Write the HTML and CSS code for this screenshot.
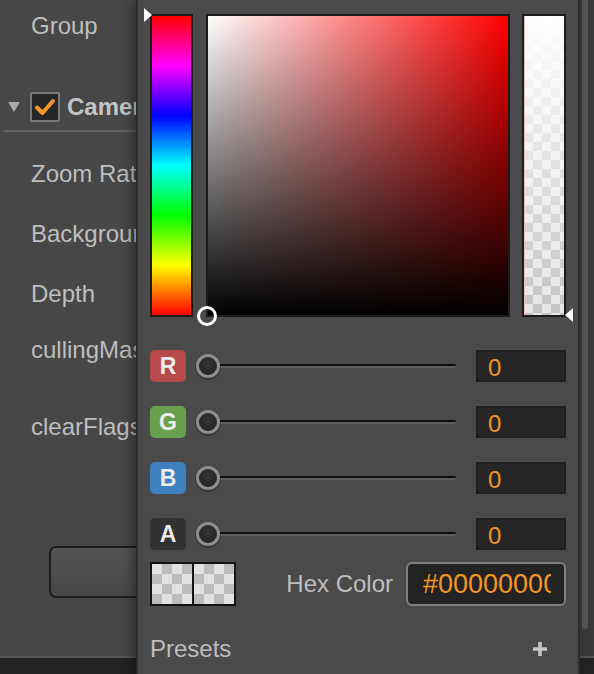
FILE: index.html
```html
<!DOCTYPE html>
<html>
<head>
<meta charset="utf-8">
<link rel="stylesheet" href="styles.css">
</head>
<body>
<div class="app">
  <div class="main">
    <div class="inspector">
      <div class="row-group">Group</div>
      <div class="section-head">
        <svg class="tri" width="12" height="12" viewBox="0 0 12 12"><path d="M0 1 H12 L6 11 Z" fill="#a9a9a9"/></svg>
        <span class="checkbox">
          <svg width="22" height="22" viewBox="0 0 22 22"><path d="M3 11.5 L8.5 17 L19 5" fill="none" stroke="#f4952a" stroke-width="4" stroke-linecap="round" stroke-linejoin="round"/></svg>
        </span>
        <span class="section-title">Camera</span>
      </div>
      <div class="sep"></div>
      <div class="prop first">Zoom Ratio</div>
      <div class="prop">Background</div>
      <div class="prop">Depth</div>
      <div class="prop tall">cullingMask</div>
      <div class="prop flags">clearFlags</div>
      <div class="btn-row"><div class="btn"></div></div>
    </div>
    <div class="scrollbar"><div class="thumb"></div></div>
  </div>
  <div class="bottom-bar"></div>

  <div class="picker">
    <div class="pickers">
      <div class="hue">
        <span class="hue-marker"></span>
      </div>
      <div class="sv">
        <div class="sv-black"></div>
        <span class="sv-marker"></span>
      </div>
      <div class="alpha">
        <div class="alpha-fill"></div>
        <span class="alpha-marker"></span>
      </div>
    </div>

    <div class="channels">
      <div class="channel">
        <span class="badge red">R</span>
        <div class="slider"><span class="knob"></span><div class="track"></div></div>
        <div class="num">0</div>
      </div>
      <div class="channel">
        <span class="badge green">G</span>
        <div class="slider"><span class="knob"></span><div class="track"></div></div>
        <div class="num">0</div>
      </div>
      <div class="channel">
        <span class="badge blue">B</span>
        <div class="slider"><span class="knob"></span><div class="track"></div></div>
        <div class="num">0</div>
      </div>
      <div class="channel">
        <span class="badge dark">A</span>
        <div class="slider"><span class="knob"></span><div class="track"></div></div>
        <div class="num">0</div>
      </div>
    </div>

    <div class="hex-row">
      <div class="swatch"><span class="sw-half"></span><span class="sw-half"></span></div>
      <span class="hex-label">Hex Color</span>
      <div class="hex-input"><span class="hex-text">#00000000</span></div>
    </div>

    <div class="presets">
      <span>Presets</span>
      <svg class="plus" width="16" height="16" viewBox="0 0 16 16"><path d="M8 1 V15 M1 8 H15" stroke="#c6c6c6" stroke-width="3.6"/></svg>
    </div>
  </div>
</div>
</body>
</html>
```

FILE: styles.css
```css
html, body {
  margin: 0;
  padding: 0;
}
body {
  width: 594px;
  height: 674px;
  overflow: hidden;
  background: #474747;
  font-family: "Liberation Sans", Arial, sans-serif;
  color: #bebebe;
}
.app {
  position: relative;
  width: 594px;
  height: 674px;
  display: flex;
  flex-direction: column;
}
.main {
  flex: 1;
  display: flex;
  min-height: 0;
}
.inspector {
  flex: 1;
  background: #474747;
  overflow: hidden;
}
.scrollbar {
  width: 14px;
  background: #393939;
  padding-left: 2px;
  box-sizing: border-box;
}
.thumb {
  width: 6px;
  height: 629px;
  background: #565656;
  border-radius: 0 0 3px 3px;
}
.bottom-bar {
  height: 16px;
  background: #222222;
  border-top: 2px solid #545454;
}
.row-group {
  height: 52px;
  line-height: 52px;
  padding-left: 31px;
  font-size: 24px;
}
.section-head {
  margin-top: 33px;
  height: 44px;
  display: flex;
  align-items: center;
  padding-left: 8px;
}
.tri {
  margin-right: 10px;
}
.checkbox {
  width: 26px;
  height: 26px;
  border: 2px solid #7b7b7b;
  background: #262626;
  border-radius: 2px;
  display: flex;
  align-items: center;
  justify-content: center;
  margin-right: 7px;
}
.section-title {
  font-weight: bold;
  font-size: 24px;
  color: #c4c4c4;
}
.sep {
  margin: 1px 0 0 4px;
  height: 2px;
  background: #616161;
}
.prop {
  height: 60px;
  line-height: 60px;
  padding-left: 31px;
  font-size: 24px;
  white-space: nowrap;
}
.prop.first {
  margin-top: 12px;
}
.prop.tall {
  height: 78px;
  line-height: 52px;
}
.prop.flags {
  height: 50px;
  line-height: 50px;
}
.btn-row {
  margin-top: 94px;
  padding-left: 49px;
}
.btn {
  height: 48px;
  width: 300px;
  border: 2px solid #1c1c1c;
  border-radius: 7px;
  background: linear-gradient(#545454, #464646);
}

/* Picker popup */
.picker {
  position: absolute;
  left: 136px;
  top: 0;
  width: 444px;
  height: 700px;
  box-sizing: border-box;
  background: #4a4a4a;
  border-left: 2px solid #2d2d2d;
  border-right: 2px solid #2d2d2d;
  box-shadow: -4px 0 10px rgba(0, 0, 0, 0.35);
  padding: 14px 12px 0 12px;
}
.pickers {
  display: flex;
  height: 303px;
}
.hue {
  position: relative;
  width: 43px;
  box-sizing: border-box;
  border: 2px solid #1c1c1c;
  background: linear-gradient(to bottom, #ff0000 0%, #ff00ff 16.67%, #0000ff 33.33%, #00ffff 50%, #00ff00 66.67%, #ffff00 83.33%, #ff0000 100%);
}
.hue-marker {
  position: absolute;
  left: -8px;
  top: -8px;
  width: 0;
  height: 0;
  border-top: 7px solid transparent;
  border-bottom: 7px solid transparent;
  border-left: 8px solid #ffffff;
}
.sv {
  position: relative;
  margin-left: 13px;
  width: 304px;
  box-sizing: border-box;
  border: 2px solid #1c1c1c;
  background: linear-gradient(to right, #ffffff, #ff0000);
}
.sv-black {
  width: 100%;
  height: 100%;
  background: linear-gradient(to bottom, rgba(0,0,0,0), #000000);
}
.sv-marker {
  position: absolute;
  left: -11px;
  bottom: -11px;
  width: 14px;
  height: 14px;
  border: 3px solid #ffffff;
  border-radius: 50%;
}
.alpha {
  position: relative;
  margin-left: 12px;
  width: 44px;
  box-sizing: border-box;
  border: 2px solid #1c1c1c;
  background-color: #e6e6e6;
  background-image:
    linear-gradient(45deg, #c4c4c4 25%, transparent 25%, transparent 75%, #c4c4c4 75%),
    linear-gradient(45deg, #c4c4c4 25%, transparent 25%, transparent 75%, #c4c4c4 75%);
  background-size: 18px 18px;
  background-position: 0 0, 9px 9px;
}
.alpha-fill {
  width: 100%;
  height: 100%;
  background: linear-gradient(to bottom, #ffffff, rgba(255,255,255,0));
  border-left: 1px solid #f0c0c0;
  box-sizing: border-box;
}
.alpha-marker {
  position: absolute;
  right: -9px;
  bottom: -7px;
  width: 0;
  height: 0;
  border-top: 7px solid transparent;
  border-bottom: 7px solid transparent;
  border-right: 8px solid #ffffff;
}

.channels {
  margin-top: 33px;
  display: flex;
  flex-direction: column;
  gap: 24px;
}
.channel {
  display: flex;
  align-items: center;
  height: 32px;
}
.badge {
  width: 36px;
  height: 32px;
  border-radius: 5px;
  display: flex;
  align-items: center;
  justify-content: center;
  font-weight: bold;
  font-size: 23px;
  color: #ececec;
}
.badge.red { background: #b94a4b; }
.badge.green { background: #69a04c; }
.badge.blue { background: #3e80be; }
.badge.dark { background: #313131; }
.slider {
  position: relative;
  margin-left: 10px;
  width: 260px;
  height: 32px;
  display: flex;
  align-items: center;
}
.track {
  margin-left: 12px;
  flex: 1;
  height: 4px;
  border-radius: 2px;
  background: linear-gradient(to bottom, #111111 50%, #5d5d5d 50%);
}
.knob {
  position: absolute;
  left: 0;
  top: 4px;
  width: 18px;
  height: 18px;
  border: 3px solid #8e8e8e;
  border-radius: 50%;
  background: radial-gradient(circle at 50% 40%, #353535, #1d1d1d);
  box-shadow: 0 1px 2px rgba(0,0,0,0.5);
  z-index: 1;
}
.num {
  margin-left: 20px;
  width: 90px;
  height: 32px;
  box-sizing: border-box;
  border: 2px solid #1f1f1f;
  background: #262626;
  color: #f39627;
  font-size: 24px;
  line-height: 31px;
  padding-left: 10px;
}

.hex-row {
  margin-top: 12px;
  display: flex;
  align-items: center;
  height: 44px;
}
.swatch {
  display: flex;
  width: 86px;
  height: 44px;
  box-sizing: border-box;
  border: 2px solid #151515;
  background: #151515;
  gap: 2px;
}
.sw-half {
  flex: 1;
  background-color: #e2e2e2;
  background-image:
    linear-gradient(45deg, #bcbcbc 25%, transparent 25%, transparent 75%, #bcbcbc 75%),
    linear-gradient(45deg, #bcbcbc 25%, transparent 25%, transparent 75%, #bcbcbc 75%);
  background-size: 20px 20px;
  background-position: 0 0, 10px 10px;
}
.hex-label {
  margin-left: auto;
  font-size: 24px;
  color: #bebebe;
}
.hex-input {
  margin-left: 13px;
  width: 160px;
  height: 44px;
  box-sizing: border-box;
  border: 2px solid #7f7f7f;
  border-radius: 6px;
  background: #232323;
  overflow: hidden;
  white-space: nowrap;
  padding-left: 15px;
  display: flex;
  align-items: center;
}
.hex-text {
  font-size: 27px;
  color: #f39627;
  overflow: hidden;
  width: 128px;
  flex-shrink: 0;
}
.presets {
  margin-top: 29px;
  display: flex;
  align-items: center;
  justify-content: space-between;
  font-size: 24px;
  color: #bebebe;
  padding-right: 18px;
}
```
